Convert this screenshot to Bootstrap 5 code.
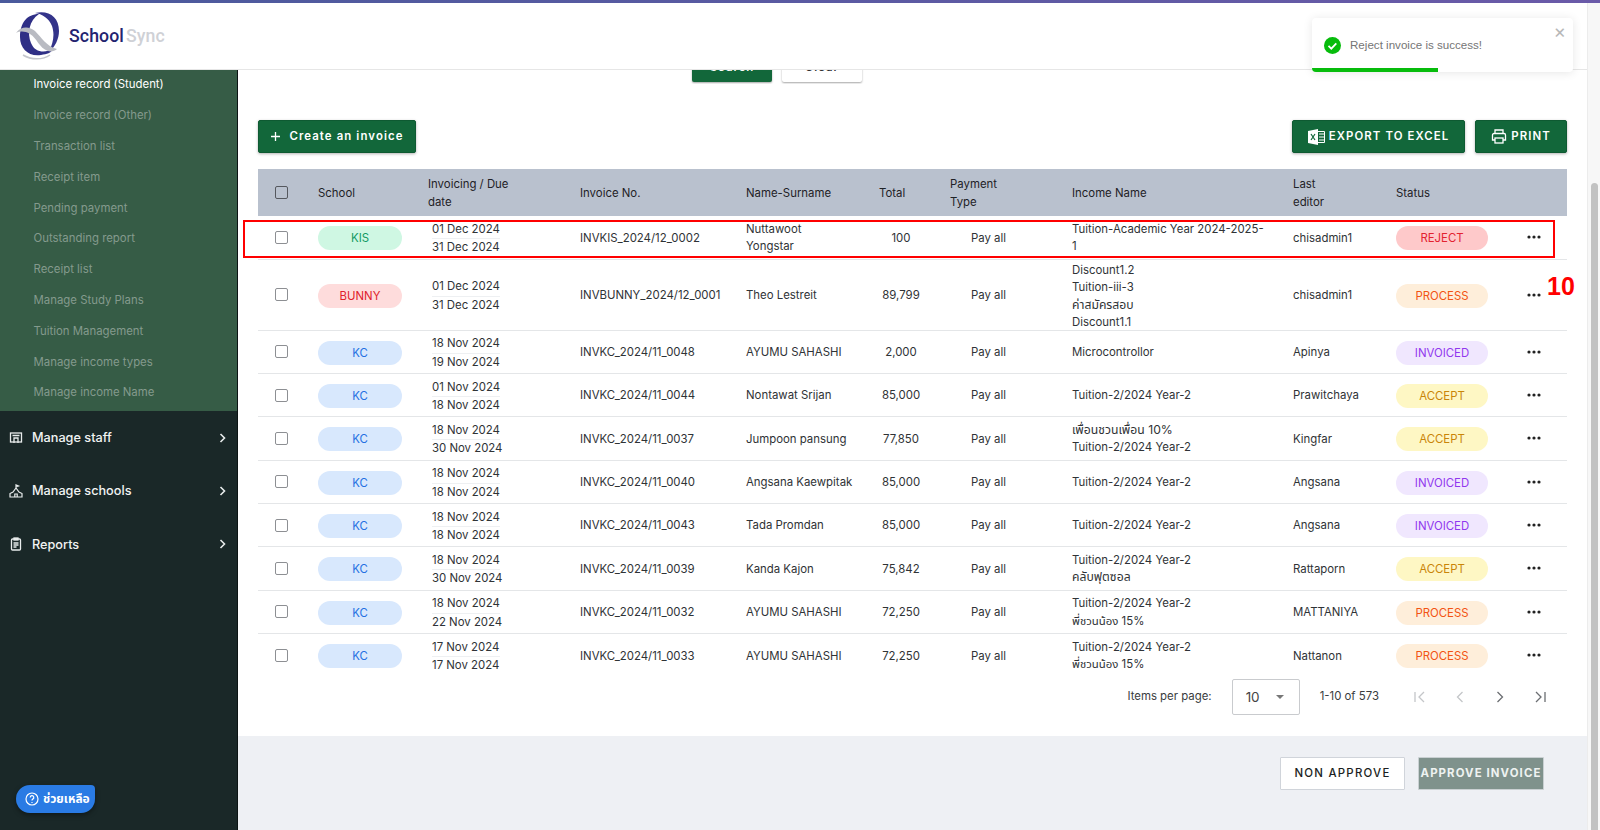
<!DOCTYPE html>
<html lang="en">
<head>
<meta charset="utf-8">
<title>SchoolSync</title>
<link href="https://cdn.jsdelivr.net/npm/bootstrap@5.3.0/dist/css/bootstrap.min.css" rel="stylesheet">
<style>
html,body{height:830px;overflow:hidden}
body{font-family:Inter,"Noto Sans Thai","Noto Sans","Liberation Sans",sans-serif;font-size:11.4px;color:#2b2f33;background:#fff}
.topline{height:3px;background:linear-gradient(90deg,#4a5a9c,#6a5aa8)}
.shell{height:827px}
.pagecol{width:1587px;min-width:0}
.scrolltrack{width:13px;background:#f7f7f7;border-left:1px solid #ececec;padding-top:180px}
.scrollthumb{width:7px;height:650px;background:#c2c2c2;border-radius:4px;margin-left:3px}
.appbar{height:67px;background:#fff;border-bottom:1px solid #e6e6e6;padding-left:15px}
.brand-a{font-family:Roboto,"Liberation Sans",sans-serif;font-size:17.7px;font-weight:500;color:#23236f;letter-spacing:.1px}
.brand-b{font-family:Roboto,"Liberation Sans",sans-serif;font-size:17.7px;font-weight:500;color:#cfd1d6;margin-left:2px;letter-spacing:.1px}
.bodyrow{height:760px}
.sidepanel{width:238px;background:#1a2828;border-right:1px solid #0c1414;overflow:hidden}
.subpanel{background:#365c46;height:341px;overflow:hidden}
.subpanel ul{margin:-.6px 0 0;padding:0;list-style:none}
.subpanel li{height:30.8px;line-height:30.8px;padding-left:33.5px;color:#849a8d;font-size:11.4px}
.subpanel li.on{color:#fff}
.menuline{height:53.3px;padding-left:9px;padding-right:11px;color:#f1f3f3;font-size:12.7px;font-weight:500}
.menuline .ico{width:14px;margin-right:9px}
.contentcol{min-width:0;background:#eef0f4}
.whitepanel{background:#fff;height:666px;padding:0 20px 0 20px}
.clipfilters{height:14px;overflow:hidden;padding-bottom:2px}
.ghostbtn{height:36px;width:80px;border-radius:2px;font-size:11.4px;font-weight:600;letter-spacing:1px;line-height:42px;text-align:center;box-shadow:0 1px 2px rgba(0,0,0,.35)}
.ghost-g{background:#12673a;color:#fff;margin-left:434px}
.ghost-w{background:#fff;color:#333;margin-left:10px}
.actionrow{margin-top:36px;height:33px;margin-bottom:16px}
.greenbtn{background:#12673a;color:#fff;border:1px solid #0e5a32;border-radius:2px;font-size:11.4px;font-weight:600;letter-spacing:1.1px;height:33px;padding:0;box-shadow:0 1px 3px rgba(0,0,0,.3)}
.greenbtn:hover{background:#12673a;color:#fff}
.btn-create{width:158px}
.btn-export{width:173px}
.btn-print{width:92px;margin-left:10px}
.tablewrap{width:1309px}
.datatable{table-layout:fixed;width:1309px;margin:0;font-size:11.4px;line-height:17.5px;color:#2f3336}
.datatable>thead>tr>th{background:#b9c1ce;font-weight:400;color:#1f2226;height:47px;padding:2px 0 0 16px;border:0;vertical-align:middle}
.datatable>tbody>tr>td{padding:2px 0 0 16px;vertical-align:middle;border-bottom:1px solid #e4e6e8;height:43.35px;white-space:nowrap}
.datatable>tbody>tr.first>td{height:43px}
.datatable>tbody>tr.tall>td{height:71px}
.datatable>tbody>tr:last-child>td{border-bottom:0}
.datatable th.ck,.datatable td.ck{padding-left:17px!important}
.stacked{margin-bottom:-2px}
.thai{font-size:12.2px;line-height:1}
.boxmark{display:block;width:13px;height:13px;border:1.6px solid #8d8f93;border-radius:2px;background:#fff;margin-bottom:2px}
thead .boxmark{border-color:#55585e;background:transparent}
.pillmark{display:block;width:84px;height:24px;line-height:24px;border-radius:12px;text-align:center;font-size:11.4px}
.p-kis{background:#cff7e3;color:#139a64}
.p-bunny{background:#fedcdc;color:#e0212c}
.p-kc{background:#d8e8fd;color:#2470e2}
.st{width:92px}
.s-rej{background:#fec9ca;color:#e3222f}
.s-pro{background:#feeeda;color:#f25413}
.s-inv{background:#f0e7fe;color:#9038ee}
.s-acc{background:#fef7c4;color:#c98508}
.dates{display:inline-block;padding-left:4px;padding-top:1px}
.dates span{display:block;width:68px;white-space:nowrap}
.dates span:first-child{border-bottom:1px solid #eef0f2;padding-bottom:0}
.totalcell{text-align:center;padding-left:5px!important;padding-right:0}
.paycell{text-align:center;padding-left:0!important;padding-right:13px!important}
.dots{display:block;margin-left:7px;margin-bottom:2px;color:#222;width:14px}
.pager{height:36px;margin-top:2px;padding-right:20px;color:#3a3d40}
.pagesel{width:68px;height:36px;border:1px solid #c9cbce;border-radius:2px;margin:0 20px;padding:0 15px 0 13px;font-size:13.5px;color:#444}
.caretmark{width:0;height:0;border-left:4px solid transparent;border-right:4px solid transparent;border-top:4px solid #777}
.pgico{width:14px;height:14px;margin-left:26px}
.pgico.firsti{margin-left:34px}
.footpanel{height:94px;padding:21px 43px 0 0}
.btn-non{width:125px;height:33px;background:#fff;border:1px solid #d0d4da;border-radius:1px;font-size:11.4px;font-weight:500;letter-spacing:1.25px;color:#1c1f22;padding:0;white-space:nowrap}
.btn-app{width:126px;height:33px;background:#7f928c;border:1px solid #c9d0d2;border-radius:1px;font-size:11.4px;font-weight:700;letter-spacing:1.1px;color:#eef2f1;padding:0;margin-left:13px;white-space:nowrap}
.flagbox{position:absolute;left:243px;top:220px;width:1312px;height:38px;border:2px solid #f00;pointer-events:none}
.flagnum{position:absolute;left:1547px;top:272px;font-family:"Liberation Sans",sans-serif;font-size:25px;line-height:28px;font-weight:700;color:#f00}
.toastbox{position:absolute;left:1312px;top:18px;width:261px;height:54px;background:#fff;border-radius:4px;box-shadow:0 1px 10px rgba(0,0,0,.1);overflow:hidden;padding-left:12px}
.toasttext{font-family:"Liberation Sans",sans-serif;color:#757575;font-size:11.6px;margin-left:9px}
.toastx{position:absolute;right:7px;top:4px;color:#b8b8b8;font-size:19px;line-height:19px}
.toastbar{position:absolute;left:0;bottom:0;width:126px;height:4px;background:#07bc0c}
.helpbtn{position:absolute;left:16px;top:785px;width:79px;height:28px;background:#2a7be4;color:#fff;border-radius:14px 4px 14px 14px;font-size:12px;font-weight:700;box-shadow:0 2px 5px rgba(0,0,0,.4);padding-left:9px}
</style>
</head>
<body>
<div class="topline"></div>
<div class="d-flex shell">
  <div class="pagecol d-flex flex-column">
    <header class="appbar d-flex align-items-center">
      <svg width="46" height="50" viewBox="0 0 46 50" class="flex-shrink-0">
        <path d="M20 2C34-1 44 6 44 20c0 8-4 16-10 21 4-9 6-17 3-26C34 7 27 3 20 2z" fill="#34348a"/>
        <path d="M24 3C12 3 5 12 5 26c0 12 9 20 21 18 6-1 10-2 12-6-8 4-18 4-22-6-4-10-2-22 8-29z" fill="#2f2f86"/>
        <path d="M1 22c5-7 13-7 19-2 7 7 11 15 22 18-2 2-6 3-9 2-9-3-11-13-18-17-5-3-10-3-14-1z" fill="#b9bbc2"/>
        <path d="M8 44c8 5 20 5 27 0" fill="none" stroke="#c4c6cc" stroke-width="1.500"/>
      </svg>
      <span class="brand-a ms-2">School</span><span class="brand-b">Sync</span>
    </header>
    <div class="d-flex bodyrow">
      <aside class="sidepanel flex-shrink-0">
        <div class="subpanel">
          <ul>
            <li class="on">Invoice record (Student)</li>
            <li>Invoice record (Other)</li>
            <li>Transaction list</li>
            <li>Receipt item</li>
            <li>Pending payment</li>
            <li>Outstanding report</li>
            <li>Receipt list</li>
            <li>Manage Study Plans</li>
            <li>Tuition Management</li>
            <li>Manage income types</li>
            <li>Manage income Name</li>
          </ul>
        </div>
        <div class="menuline d-flex align-items-center">
          <svg class="ico" width="14" height="14" viewBox="0 0 14 14" fill="none" stroke="#e8ecec" stroke-width="1.3"><rect x="1.5" y="2" width="11" height="9"/><path d="M3.5 4.5h7M5 12V7h4v5"/></svg>
          <span class="flex-grow-1">Manage staff</span>
          <svg width="7" height="10" viewBox="0 0 7 10" fill="none" stroke="#e8ecec" stroke-width="1.6"><path d="M1.5 1l4 4-4 4"/></svg>
        </div>
        <div class="menuline d-flex align-items-center">
          <svg class="ico" width="14" height="14" viewBox="0 0 14 14" fill="none" stroke="#e8ecec" stroke-width="1.2"><path d="M1 13V9.5l3-1.5 3-4 3 4 3 1.5V13zM7 4V1l2.5 1L7 3M5.8 13v-3h2.4v3"/></svg>
          <span class="flex-grow-1">Manage schools</span>
          <svg width="7" height="10" viewBox="0 0 7 10" fill="none" stroke="#e8ecec" stroke-width="1.6"><path d="M1.5 1l4 4-4 4"/></svg>
        </div>
        <div class="menuline d-flex align-items-center">
          <svg class="ico" width="14" height="14" viewBox="0 0 14 14" fill="none" stroke="#e8ecec" stroke-width="1.3"><rect x="2.5" y="2" width="9" height="11" rx="1"/><rect x="5" y="1" width="4" height="2" fill="#e8ecec"/><path d="M4.5 6h5M4.5 8h5M4.5 10h3"/></svg>
          <span class="flex-grow-1">Reports</span>
          <svg width="7" height="10" viewBox="0 0 7 10" fill="none" stroke="#e8ecec" stroke-width="1.6"><path d="M1.5 1l4 4-4 4"/></svg>
        </div>
      </aside>
      <main class="contentcol flex-grow-1">
        <div class="whitepanel">
          <div class="clipfilters d-flex align-items-end justify-content-start">
            <div class="ghostbtn ghost-g">Search</div>
            <div class="ghostbtn ghost-w">Clear</div>
          </div>
          <div class="actionrow d-flex justify-content-between">
            <button class="btn greenbtn btn-create d-flex align-items-center justify-content-center gap-2">
              <svg width="11" height="11" viewBox="0 0 11 11" stroke="#fff" stroke-width="1.3"><path d="M5.5 1v9M1 5.5h9"/></svg>Create an invoice
            </button>
            <div class="d-flex">
              <button class="btn greenbtn btn-export d-flex align-items-center justify-content-center gap-1">
                <svg width="17" height="16" viewBox="0 0 17 16"><path d="M0 2l10-2v16L0 14z" fill="#fff"/><path d="M3 5l4 6M7 5l-4 6" stroke="#12673a" stroke-width="1.2"/><path d="M10 2.500h6.500v11H10" fill="none" stroke="#fff"/><path d="M11 5h5M11 8h5M11 11h5" stroke="#fff"/></svg>EXPORT TO EXCEL
              </button>
              <button class="btn greenbtn btn-print d-flex align-items-center justify-content-center gap-1">
                <svg width="16" height="15" viewBox="0 0 16 15" fill="none" stroke="#fff" stroke-width="1.300"><path d="M4 4.500V1h8v3.500M4 11H1.500V6a1.500 1.500 0 0 1 1.500-1.500h10A1.500 1.500 0 0 1 14.500 6v5H12"/><rect x="4" y="9" width="8" height="5"/></svg>PRINT
              </button>
            </div>
          </div>
          <div class="tablewrap">
            <table class="table datatable">
              <colgroup><col style="width:44px"><col style="width:110px"><col style="width:152px"><col style="width:166px"><col style="width:133px"><col style="width:71px"><col style="width:122px"><col style="width:221px"><col style="width:103px"><col style="width:124px"><col style="width:63px"></colgroup>
              <thead><tr>
                <th class="ck"><span class="boxmark"></span></th><th>School</th><th>Invoicing / Due<br>date</th><th>Invoice No.</th><th>Name-Surname</th><th>Total</th><th>Payment<br>Type</th><th>Income Name</th><th>Last<br>editor</th><th>Status</th><th></th>
              </tr></thead>
              <tbody>
                <tr class="first"><td class="ck"><span class="boxmark"></span></td><td><span class="pillmark p-kis">KIS</span></td><td><div class="dates"><span>01 Dec 2024</span><span>31 Dec 2024</span></div></td><td>INVKIS_2024/12_0002</td><td>Nuttawoot<br>Yongstar</td><td class="totalcell">100</td><td class="paycell">Pay all</td><td>Tuition-Academic Year 2024-2025-<br>1</td><td>chisadmin1</td><td><span class="pillmark st s-rej">REJECT</span></td><td><svg class="dots" width="14" height="4" viewBox="0 0 14 4" fill="currentColor"><circle cx="2" cy="2" r="1.600"/><circle cx="7" cy="2" r="1.600"/><circle cx="12" cy="2" r="1.600"/></svg></td></tr>
                <tr class="tall"><td class="ck"><span class="boxmark"></span></td><td><span class="pillmark p-bunny">BUNNY</span></td><td><div class="dates"><span>01 Dec 2024</span><span>31 Dec 2024</span></div></td><td>INVBUNNY_2024/12_0001</td><td>Theo Lestreit</td><td class="totalcell">89,799</td><td class="paycell">Pay all</td><td><div class="stacked">Discount1.2<br>Tuition-iii-3<br><span class="thai">ค่าสมัครสอบ</span><br>Discount1.1</div></td><td>chisadmin1</td><td><span class="pillmark st s-pro">PROCESS</span></td><td><svg class="dots" width="14" height="4" viewBox="0 0 14 4" fill="currentColor"><circle cx="2" cy="2" r="1.600"/><circle cx="7" cy="2" r="1.600"/><circle cx="12" cy="2" r="1.600"/></svg></td></tr>
                <tr><td class="ck"><span class="boxmark"></span></td><td><span class="pillmark p-kc">KC</span></td><td><div class="dates"><span>18 Nov 2024</span><span>19 Nov 2024</span></div></td><td>INVKC_2024/11_0048</td><td>AYUMU SAHASHI</td><td class="totalcell">2,000</td><td class="paycell">Pay all</td><td>Microcontrollor</td><td>Apinya</td><td><span class="pillmark st s-inv">INVOICED</span></td><td><svg class="dots" width="14" height="4" viewBox="0 0 14 4" fill="currentColor"><circle cx="2" cy="2" r="1.600"/><circle cx="7" cy="2" r="1.600"/><circle cx="12" cy="2" r="1.600"/></svg></td></tr>
                <tr><td class="ck"><span class="boxmark"></span></td><td><span class="pillmark p-kc">KC</span></td><td><div class="dates"><span>01 Nov 2024</span><span>18 Nov 2024</span></div></td><td>INVKC_2024/11_0044</td><td>Nontawat Srijan</td><td class="totalcell">85,000</td><td class="paycell">Pay all</td><td>Tuition-2/2024 Year-2</td><td>Prawitchaya</td><td><span class="pillmark st s-acc">ACCEPT</span></td><td><svg class="dots" width="14" height="4" viewBox="0 0 14 4" fill="currentColor"><circle cx="2" cy="2" r="1.600"/><circle cx="7" cy="2" r="1.600"/><circle cx="12" cy="2" r="1.600"/></svg></td></tr>
                <tr><td class="ck"><span class="boxmark"></span></td><td><span class="pillmark p-kc">KC</span></td><td><div class="dates"><span>18 Nov 2024</span><span>30 Nov 2024</span></div></td><td>INVKC_2024/11_0037</td><td>Jumpoon pansung</td><td class="totalcell">77,850</td><td class="paycell">Pay all</td><td><span class="thai">เพื่อนชวนเพื่อน 10%</span><br>Tuition-2/2024 Year-2</td><td>Kingfar</td><td><span class="pillmark st s-acc">ACCEPT</span></td><td><svg class="dots" width="14" height="4" viewBox="0 0 14 4" fill="currentColor"><circle cx="2" cy="2" r="1.600"/><circle cx="7" cy="2" r="1.600"/><circle cx="12" cy="2" r="1.600"/></svg></td></tr>
                <tr><td class="ck"><span class="boxmark"></span></td><td><span class="pillmark p-kc">KC</span></td><td><div class="dates"><span>18 Nov 2024</span><span>18 Nov 2024</span></div></td><td>INVKC_2024/11_0040</td><td>Angsana Kaewpitak</td><td class="totalcell">85,000</td><td class="paycell">Pay all</td><td>Tuition-2/2024 Year-2</td><td>Angsana</td><td><span class="pillmark st s-inv">INVOICED</span></td><td><svg class="dots" width="14" height="4" viewBox="0 0 14 4" fill="currentColor"><circle cx="2" cy="2" r="1.600"/><circle cx="7" cy="2" r="1.600"/><circle cx="12" cy="2" r="1.600"/></svg></td></tr>
                <tr><td class="ck"><span class="boxmark"></span></td><td><span class="pillmark p-kc">KC</span></td><td><div class="dates"><span>18 Nov 2024</span><span>18 Nov 2024</span></div></td><td>INVKC_2024/11_0043</td><td>Tada Promdan</td><td class="totalcell">85,000</td><td class="paycell">Pay all</td><td>Tuition-2/2024 Year-2</td><td>Angsana</td><td><span class="pillmark st s-inv">INVOICED</span></td><td><svg class="dots" width="14" height="4" viewBox="0 0 14 4" fill="currentColor"><circle cx="2" cy="2" r="1.600"/><circle cx="7" cy="2" r="1.600"/><circle cx="12" cy="2" r="1.600"/></svg></td></tr>
                <tr><td class="ck"><span class="boxmark"></span></td><td><span class="pillmark p-kc">KC</span></td><td><div class="dates"><span>18 Nov 2024</span><span>30 Nov 2024</span></div></td><td>INVKC_2024/11_0039</td><td>Kanda Kajon</td><td class="totalcell">75,842</td><td class="paycell">Pay all</td><td>Tuition-2/2024 Year-2<br><span class="thai">คลับฟุตซอล</span></td><td>Rattaporn</td><td><span class="pillmark st s-acc">ACCEPT</span></td><td><svg class="dots" width="14" height="4" viewBox="0 0 14 4" fill="currentColor"><circle cx="2" cy="2" r="1.600"/><circle cx="7" cy="2" r="1.600"/><circle cx="12" cy="2" r="1.600"/></svg></td></tr>
                <tr><td class="ck"><span class="boxmark"></span></td><td><span class="pillmark p-kc">KC</span></td><td><div class="dates"><span>18 Nov 2024</span><span>22 Nov 2024</span></div></td><td>INVKC_2024/11_0032</td><td>AYUMU SAHASHI</td><td class="totalcell">72,250</td><td class="paycell">Pay all</td><td>Tuition-2/2024 Year-2<br>พี่ชวนน้อง 15%</td><td>MATTANIYA</td><td><span class="pillmark st s-pro">PROCESS</span></td><td><svg class="dots" width="14" height="4" viewBox="0 0 14 4" fill="currentColor"><circle cx="2" cy="2" r="1.600"/><circle cx="7" cy="2" r="1.600"/><circle cx="12" cy="2" r="1.600"/></svg></td></tr>
                <tr><td class="ck"><span class="boxmark"></span></td><td><span class="pillmark p-kc">KC</span></td><td><div class="dates"><span>17 Nov 2024</span><span>17 Nov 2024</span></div></td><td>INVKC_2024/11_0033</td><td>AYUMU SAHASHI</td><td class="totalcell">72,250</td><td class="paycell">Pay all</td><td>Tuition-2/2024 Year-2<br>พี่ชวนน้อง 15%</td><td>Nattanon</td><td><span class="pillmark st s-pro">PROCESS</span></td><td><svg class="dots" width="14" height="4" viewBox="0 0 14 4" fill="currentColor"><circle cx="2" cy="2" r="1.600"/><circle cx="7" cy="2" r="1.600"/><circle cx="12" cy="2" r="1.600"/></svg></td></tr>
              </tbody>
            </table>
            <div class="pager d-flex align-items-center justify-content-end">
              <span>Items per page:</span>
              <div class="pagesel d-flex align-items-center justify-content-between"><span>10</span><span class="caretmark"></span></div>
              <span>1-10 of 573</span>
              <svg class="pgico firsti" viewBox="0 0 14 14" fill="none" stroke="#c4c6c9" stroke-width="1.300"><path d="M2 2v10M11 2L6 7l5 5"/></svg>
              <svg class="pgico" viewBox="0 0 14 14" fill="none" stroke="#c4c6c9" stroke-width="1.300"><path d="M9.500 2L4.500 7l5 5"/></svg>
              <svg class="pgico" viewBox="0 0 14 14" fill="none" stroke="#6b6e72" stroke-width="1.300"><path d="M4.500 2l5 5-5 5"/></svg>
              <svg class="pgico" viewBox="0 0 14 14" fill="none" stroke="#6b6e72" stroke-width="1.300"><path d="M3 2l5 5-5 5M12 2v10"/></svg>
            </div>
          </div>
        </div>
        <div class="footpanel d-flex justify-content-end align-items-start">
          <button class="btn btn-non">NON APPROVE</button>
          <button class="btn btn-app">APPROVE INVOICE</button>
        </div>
      </main>
    </div>
  </div>
  <div class="scrolltrack flex-shrink-0"><div class="scrollthumb"></div></div>
</div>

<div class="flagbox"></div>
<div class="flagnum">10</div>
<div class="toastbox d-flex align-items-center">
  <svg width="17" height="17" viewBox="0 0 17 17"><circle cx="8.500" cy="8.500" r="8.500" fill="#07bc0c"/><path d="M4.500 8.800l2.800 2.800 5-5.300" fill="none" stroke="#fff" stroke-width="1.800"/></svg>
  <span class="toasttext">Reject invoice is success!</span>
  <span class="toastx">×</span>
  <div class="toastbar"></div>
</div>
<div class="helpbtn d-flex align-items-center gap-1">
  <svg width="14" height="14" viewBox="0 0 14 14" fill="none" stroke="#fff" stroke-width="1.200"><circle cx="7" cy="7" r="6"/><path d="M5.200 5.500a1.800 1.800 0 1 1 2.600 1.600c-.6.300-.8.700-.8 1.400M7 10v1"/></svg>
  <span>ช่วยเหลือ</span>
</div>
</body>
</html>
